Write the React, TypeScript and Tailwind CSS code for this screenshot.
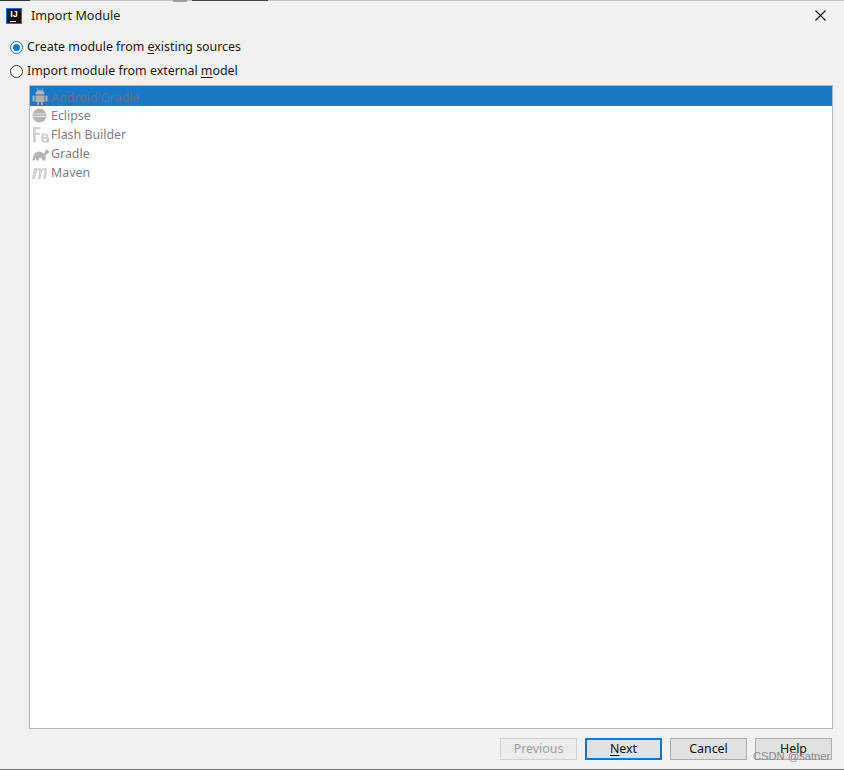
const font = "font-['Noto_Sans','Noto_Sans_CJK_SC',sans-serif]";

function AndroidIcon() {
  return (
    <svg width="16" height="18" viewBox="0 0 16 18" fill="#afafaf">
      <path d="M3.500 6.500a4.500 4.500 0 0 1 9 0z" />
      <path d="M3.500 7.500h9v6.500h-1.800v3H9v-3H7v3H5.300v-3H3.500z" />
      <rect x="0.500" y="7.500" width="2.200" height="6" rx="1.100" />
      <rect x="13.300" y="7.500" width="2.200" height="6" rx="1.100" />
      <path d="M5 .5l1.500 2.500M11 .5L9.500 3" stroke="#afafaf" fill="none" />
    </svg>
  );
}

function EclipseIcon() {
  return (
    <svg width="16" height="16" viewBox="0 0 16 16">
      <circle cx="7.500" cy="7.500" r="7" fill="#b4b4b4" />
      <rect x="0.500" y="5.500" width="14" height="1" fill="#e4e4e4" />
      <rect x="0.500" y="8" width="14" height="1" fill="#e4e4e4" />
    </svg>
  );
}

function FlashIcon() {
  return (
    <svg width="17" height="16" viewBox="0 0 17 16" fill="#cfcfcf">
      <path d="M1 0h7.500v2.200H3.700v3.600h4.300v2.200H3.700V15.500H1z" />
      <path d="M9.500 6.500h4.300a2.300 2.300 0 0 1 1.800 3.800A2.500 2.500 0 0 1 14.200 15.500H9.500zm2.200 1.800v1.700h1.700a.85.850 0 0 0 0-1.700zm0 3.400v2h2a1 1 0 0 0 0-2z" fillRule="evenodd" />
    </svg>
  );
}

function GradleIcon() {
  return (
    <svg width="17" height="14" viewBox="0 0 17 14" fill="#b5b5b5">
      <path d="M.5 13.500c0-5 2.500-9 6.700-9 1.800 0 3 .8 4 2 1.200-.3 2-1.700 2.500-4 1.200-.3 3.200.6 3.200 2.300 0 1.400-1.200 2.200-2.400 2.700-.7.300-1 1-1 1.800v4.200H10v-2.300H7v2.300H4.200v-2.300H3.300l-.8 2.300z" />
    </svg>
  );
}

function MavenIcon() {
  return (
    <svg width="17" height="12" viewBox="0 0 17 12" fill="#d2d2d2">
      <path d="M0 12L2 1h2.600l-.2 1.200C5.300 1.200 6.300.7 7.300.7c1.100 0 1.900.6 2.200 1.600C10.500 1.200 11.600.7 12.700.7c1.800 0 2.800 1.300 2.400 3.200L13.700 12h-2.800l1.300-7.500c.15-.9-.2-1.300-.8-1.300-.6 0-1.200.5-1.500 1.200L8.500 12H5.800l1.300-7.500c.15-.9-.2-1.300-.8-1.300-.6 0-1.200.5-1.500 1.200L2.800 12z" />
    </svg>
  );
}

function Radio({ checked }: { checked?: boolean }) {
  return (
    <span
      className={`flex h-[13px] w-[13px] shrink-0 items-center justify-center rounded-full border bg-white ${
        checked ? "border-[#0078d7]" : "border-[#333333]"
      }`}
    >
      {checked && <span className="h-[7px] w-[7px] rounded-full bg-[#0078d7]" />}
    </span>
  );
}

const rows = [
  { name: "Android Gradle", icon: <AndroidIcon />, selected: true },
  { name: "Eclipse", icon: <EclipseIcon /> },
  { name: "Flash Builder", icon: <FlashIcon /> },
  { name: "Gradle", icon: <GradleIcon /> },
  { name: "Maven", icon: <MavenIcon /> },
];

function Btn({ children, variant }: { children: React.ReactNode; variant?: "disabled" | "focus" }) {
  const cls =
    variant === "disabled"
      ? "border border-[#d0d0d0] bg-[#ececec] text-[#a0a0a0]"
      : variant === "focus"
      ? "border-2 border-[#0078d7] bg-[#e1e1e1] text-[#111111]"
      : "border border-[#adadad] bg-[#e1e1e1] text-[#111111]";
  return (
    <div className={`flex h-[22px] w-[77px] items-center justify-center text-[12.400px] ${cls}`}>{children}</div>
  );
}

export default function App() {
  return (
    <div className={`relative flex h-[770px] w-[844px] flex-col overflow-hidden bg-[#f1f1f1] text-[12.400px] text-[#1a1a1a] ${font}`}>
      <div className="flex h-[30px] shrink-0 items-center border-t border-[#c4c4c4] pl-[6px] pr-[18px]">
        <div className="flex h-4 w-4 flex-col items-center justify-between border border-[#0a6fd0] bg-[#111111] pt-[1px]">
          <span className="font-['Liberation_Sans',sans-serif] text-[9px] font-bold leading-[9px] text-white">IJ</span>
          <span className="mb-[1px] mr-[3px] h-px w-[6px] bg-white" />
        </div>
        <span className="ml-[9px] mt-[2px] text-[12.600px]">Import Module</span>
        <svg className="ml-auto" width="11" height="11" viewBox="0 0 11 11" stroke="#111111" strokeWidth="1.100" fill="none">
          <path d="M.5.5l10 10M10.500.5l-10 10" />
        </svg>
      </div>

      <div className="flex flex-1 flex-col pl-[10px] pr-[11px]">
        <div className="mt-[5px] flex h-6 items-center gap-[4px]">
          <Radio checked />
          <span>
            Create module from <span className="underline underline-offset-2">e</span>xisting sources
          </span>
        </div>
        <div className="flex h-6 items-center gap-[4px]">
          <Radio />
          <span>
            Import module from external <span className="underline underline-offset-2">m</span>odel
          </span>
        </div>

        <div className="ml-[19px] mt-[2px] h-[644px] border border-[#b4b4b4] bg-white">
          {rows.map((r) => (
            <div
              key={r.name}
              className={`flex items-center pl-[1px] ${
                r.selected ? "h-[20px] bg-[#1a79c4] pt-px text-[#6b6f80]" : "h-[19px] text-[#7d7d7d]"
              }`}
            >
              <span className="flex w-[18px] justify-center">{r.icon}</span>
              <span className={`ml-[2px] ${r.selected ? "mt-[3px]" : "mt-[2px]"}`}>{r.name}</span>
            </div>
          ))}
        </div>

        <div className="-translate-x-px mt-[9px] flex justify-end gap-2 pr-0">
          <Btn variant="disabled">Previous</Btn>
          <Btn variant="focus">
            <span>
              <span className="underline underline-offset-2">N</span>ext
            </span>
          </Btn>
          <Btn>Cancel</Btn>
          <Btn>Help</Btn>
        </div>
      </div>

      <div className="h-px shrink-0 bg-[#777777]" />

      <div className="absolute left-0 top-0 h-px w-[30px] bg-[#333333]" />
      <div className="absolute left-[173px] top-0 h-[2px] w-[14px] bg-[#a0a0a0]" />
      <div className="absolute left-[192px] top-0 h-px w-[76px] bg-[#444444]" />

      <span className="absolute left-[753px] top-[749px] font-['Liberation_Sans',sans-serif] text-[11.200px] leading-[14px] text-[#8a8a8a]">
        CSDN @satner
      </span>
    </div>
  );
}
